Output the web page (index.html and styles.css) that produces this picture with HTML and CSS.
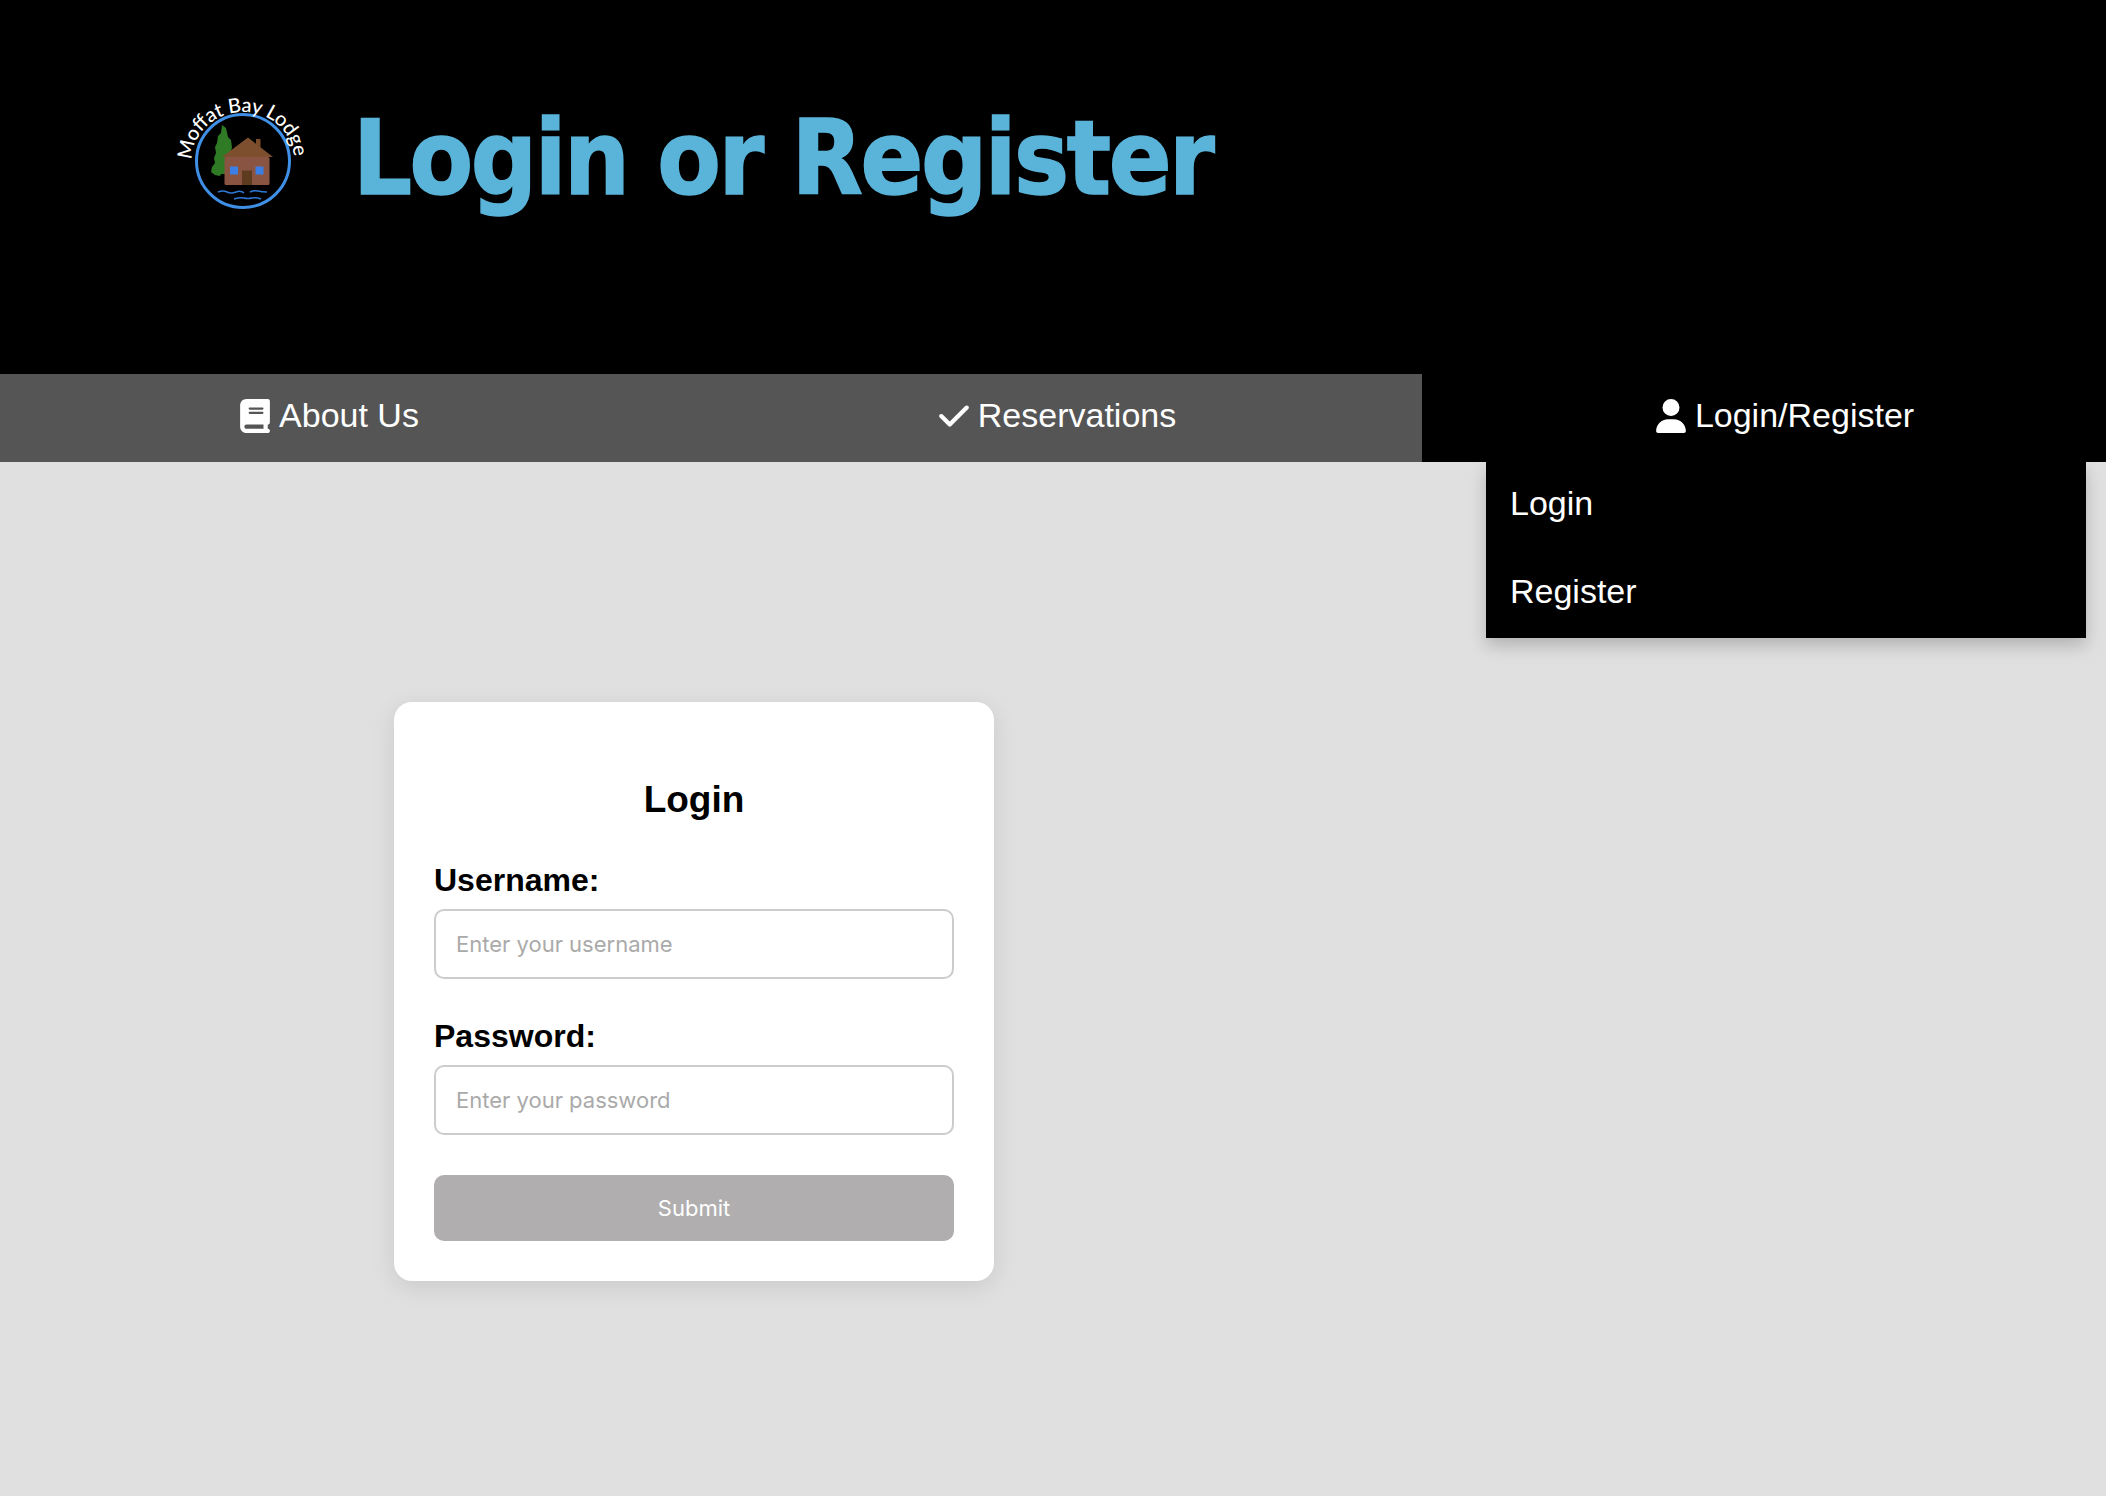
FILE: index.html
```html
<!DOCTYPE html>
<html lang="en">
<head>
<meta charset="utf-8">
<title>Login or Register</title>
<link rel="stylesheet" href="styles.css">
</head>
<body>
<header class="site-header">
  <svg class="logo" viewBox="0 0 200 170" aria-label="Moffat Bay Lodge logo">
    <defs><path id="arc" d="M42 90 A51 48 0 0 1 144 90"/></defs>
    <circle cx="93" cy="91" r="46.500" fill="none" stroke="#3f8fe6" stroke-width="3"/>
    <text class="logo-text"><textPath href="#arc" textLength="152" lengthAdjust="spacing">Moffat Bay Lodge</textPath></text>
    <path fill="#2f7a24" d="M72 55l4 3 2 9 3 3 1 8-2 5 2 3-3 4 1 8-4 4v2h-5l-1 2-5-1-4-3 1-5 3-4-1-5 2-5-1-6 2-4 1-7 3-3z"/>
    <rect x="106" y="69" width="4.500" height="9" fill="#7a4a2a"/>
    <rect x="74.500" y="87" width="45" height="28" rx="1.500" fill="#8a5443"/>
    <path fill="#7d4f2e" d="M98 67.500L123 87H72z"/>
    <rect x="80" y="96.500" width="8" height="8" fill="#3a7fe6"/>
    <rect x="105.500" y="96.500" width="8" height="8" fill="#3a7fe6"/>
    <rect x="92" y="100.500" width="10" height="14.500" fill="#5e3a1e"/>
    <g fill="none" stroke="#2f78d8" stroke-width="1.500">
      <path d="M68 122q5-2 9 0t9 0 8 1"/>
      <path d="M100 122q4-2 8-1t9 1"/>
      <path d="M84 129q6-2 10-1t8 0 9 1"/>
    </g>
  </svg>
  <h1 class="page-title">Login or Register</h1>
</header>
<nav class="main-nav">
  <a class="nav-item nav-about" href="#">
    <svg class="icon" viewBox="0 0 448 512"><path d="M96 0C43 0 0 43 0 96V416c0 53 43 96 96 96H384h32c17.700 0 32-14.300 32-32s-14.300-32-32-32V384c17.700 0 32-14.300 32-32V32c0-17.700-14.300-32-32-32H384 96zm0 384H352v64H96c-17.700 0-32-14.300-32-32s14.300-32 32-32zm32-240c0-8.800 7.200-16 16-16H336c8.800 0 16 7.200 16 16s-7.200 16-16 16H144c-8.800 0-16-7.200-16-16zm16 48H336c8.800 0 16 7.200 16 16s-7.200 16-16 16H144c-8.800 0-16-7.200-16-16s7.200-16 16-16z"/></svg>
    About Us
  </a>
  <a class="nav-item nav-reservations" href="#">
    <svg class="icon" viewBox="0 0 448 512"><path d="M438.600 105.400c12.500 12.500 12.500 32.800 0 45.300l-256 256c-12.500 12.500-32.800 12.500-45.300 0l-128-128c-12.500-12.500-12.500-32.800 0-45.300s32.800-12.500 45.300 0L160 338.700 393.400 105.400c12.500-12.500 32.800-12.500 45.300 0z"/></svg>
    Reservations
  </a>
  <div class="nav-item nav-account">
    <svg class="icon" viewBox="0 0 448 512"><path d="M224 256A128 128 0 1 0 224 0a128 128 0 1 0 0 256zm-45.700 48C79.800 304 0 383.800 0 482.300C0 498.700 13.300 512 29.700 512H418.300c16.400 0 29.700-13.300 29.700-29.700C448 383.800 368.200 304 269.700 304H178.300z"/></svg>
    Login/Register
    <div class="dropdown">
      <a class="dropdown-link" href="#">Login</a>
      <a class="dropdown-link" href="#">Register</a>
    </div>
  </div>
</nav>
<main class="content">
  <form class="login-card">
    <h2 class="card-title">Login</h2>
    <label class="field-label" for="username">Username:</label>
    <input class="field-input" id="username" type="text" placeholder="Enter your username">
    <label class="field-label field-label-second" for="password">Password:</label>
    <input class="field-input" id="password" type="password" placeholder="Enter your password">
    <button class="submit-btn" type="button">Submit</button>
  </form>
</main>
</body>
</html>
```
FILE: styles.css
```css
* { box-sizing: border-box; }
html, body { margin: 0; padding: 0; }
body {
  height: 1496px;
  overflow: hidden;
  background: #e0e0e0;
  font-family: "Liberation Sans", Arial, sans-serif;
  color: #000;
}
.site-header {
  height: 374px;
  background: #000;
  display: flex;
  align-items: flex-start;
  padding: 70px 0 0 150px;
}
.logo { width: 200px; height: 170px; flex: none; }
.logo-text {
  font-family: "Lato", sans-serif;
  font-size: 20px;
  font-weight: 500;
  fill: #fff;
}
.page-title {
  margin: 1px 0 0 3px;
  font-family: "DejaVu Sans", Verdana, sans-serif;
  font-stretch: condensed;
  font-size: 103px;
  line-height: 175px;
  font-weight: 700;
  letter-spacing: -2.450px;
  -webkit-text-stroke: 1.500px #5ab4da;
  color: #5ab4da;
  white-space: nowrap;
}
.main-nav {
  height: 88px;
  background: #555;
  display: grid;
  grid-template-columns: 711px 711px 684px;
}
.nav-item {
  display: flex;
  align-items: center;
  justify-content: center;
  gap: 9px;
  position: relative;
  padding-bottom: 5px;
  font-size: 34px;
  color: #fff;
  text-decoration: none;
}
.nav-about { padding-right: 52px; }
.nav-reservations { padding-right: 18px; }
.nav-account { background: #000; padding-left: 42px; }
.icon { width: 30px; height: 34px; fill: #fff; flex: none; }
.dropdown {
  position: absolute;
  top: 88px;
  left: 64px;
  width: 600px;
  height: 176px;
  background: #000;
  box-shadow: 0 8px 16px rgba(0, 0, 0, 0.2);
  z-index: 2;
}
.dropdown-link {
  display: block;
  height: 88px;
  padding: 0 24px;
  line-height: 83px;
  color: #fff;
  text-decoration: none;
}
.content { padding: 240px 0 0 394px; }
.login-card {
  width: 600px;
  height: 579px;
  padding: 40px;
  background: #fff;
  border-radius: 18px;
  box-shadow: 0 6px 24px rgba(0, 0, 0, 0.1);
  display: flex;
  flex-direction: column;
}
.card-title {
  margin: 37px 0 0;
  font-size: 37px;
  line-height: 42px;
  font-weight: 700;
  text-align: center;
}
.field-label {
  margin-top: 41px;
  font-size: 32px;
  line-height: 37px;
  font-weight: 700;
}
.field-label-second { margin-top: 39px; }
.field-input {
  margin-top: 10px;
  width: 520px;
  height: 70px;
  padding: 0 20px;
  border: 2px solid #ccc;
  border-radius: 10px;
  background: #fff;
  font-family: "Inter", sans-serif;
  font-size: 22px;
  outline: none;
}
.field-input::placeholder { color: #aaa; opacity: 1; }
.submit-btn {
  margin-top: 40px;
  width: 520px;
  height: 66px;
  border: 0;
  border-radius: 10px;
  background: #b0aeaf;
  color: #fff;
  font-family: "Inter", sans-serif;
  font-size: 22px;
}
```
